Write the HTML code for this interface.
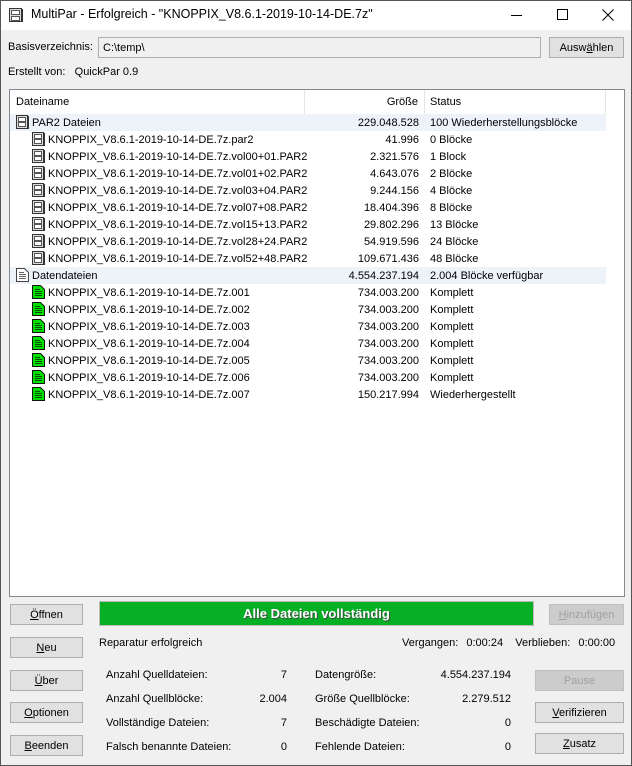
<!DOCTYPE html>
<html><head><style>
*{margin:0;padding:0;box-sizing:border-box}
body{width:632px;height:766px;overflow:hidden;background:#f0f0f0;font-family:"Liberation Sans",sans-serif;font-size:11px;color:#000;position:relative}
.frame{position:absolute;left:0;top:0;width:632px;height:766px;border:1px solid #555;z-index:5;pointer-events:none}
.a{position:absolute;white-space:nowrap}
.title{position:absolute;left:0;top:0;width:632px;height:30px;background:#fff}
.btn{position:absolute;background:#e1e1e1;border:1px solid #adadad;text-align:center;line-height:20px}
.dis{color:#a0a0a0;background:#cccccc;border-color:#bfbfbf}
.list{position:absolute;left:9px;top:89px;width:616px;height:508px;background:#fff;border:1px solid #828790}
.hdr{position:absolute;top:0;height:24px;line-height:25px;border-right:1px solid #e5e5e5}
.row{position:absolute;left:0;width:596px;height:17px;line-height:18px}
.hl{background:#eef3fa}
.ic{position:absolute;width:13px;height:14px}
.r{text-align:right}
u{text-decoration:underline}
</style></head><body>
<div class="frame"></div>
<div class="title"></div>
<svg class="a" style="left:8px;top:7px" width="16" height="16"><rect x="1.5" y="1.5" width="12" height="13" fill="#ddd" stroke="#333"/><rect x="3.5" y="3.5" width="8" height="4" fill="#fff" stroke="#555"/><rect x="3.5" y="9.5" width="8" height="4" fill="#fff" stroke="#555"/><line x1="14.5" y1="2" x2="14.5" y2="15" stroke="#333"/></svg>
<div class="a" style="left:31px;top:7px;font-size:12.5px">MultiPar - Erfolgreich - "KNOPPIX_V8.6.1-2019-10-14-DE.7z"</div>
<div class="a" style="left:511px;top:15px;width:11px;height:1px;background:#000"></div>
<div class="a" style="left:557px;top:9px;width:11px;height:11px;border:1px solid #000"></div>
<svg class="a" style="left:602px;top:9px" width="12" height="12"><path d="M0.5 0.5L11.5 11.5M11.5 0.5L0.5 11.5" stroke="#000"/></svg>

<div class="a" style="left:8px;top:41px">Basisverzeichnis:</div>
<div class="a" style="left:98px;top:37px;width:443px;height:21px;border:1px solid #adadad;background:#f0f0f0;padding:4px 4px">C:\temp\</div>
<div class="btn" style="left:549px;top:37px;width:75px;height:21px">Ausw<u>ä</u>hlen</div>
<div class="a" style="left:8px;top:66px">Erstellt von:&nbsp;&nbsp; QuickPar 0.9</div>

<div class="list">
<div class="hdr" style="left:0;width:295px;padding-left:6px">Dateiname</div>
<div class="hdr r" style="left:295px;width:120px;padding-right:6px">Größe</div>
<div class="hdr" style="left:415px;width:181px;padding-left:5px">Status</div>
<div id="rows"></div>
</div>

<div class="a" style="left:99px;top:601px;width:435px;height:25px;background:#06b025;border:1px solid #bcbcbc;color:#fff;font-weight:bold;font-size:13px;text-align:center;line-height:24px;text-shadow:1px 1px 1px #444">Alle Dateien vollständig</div>
<div class="btn" style="left:10px;top:604px;width:73px;height:21px"><u>Ö</u>ffnen</div>
<div class="btn" style="left:10px;top:637px;width:73px;height:21px"><u>N</u>eu</div>
<div class="btn" style="left:10px;top:670px;width:73px;height:21px"><u>Ü</u>ber</div>
<div class="btn" style="left:10px;top:702px;width:73px;height:21px"><u>O</u>ptionen</div>
<div class="btn" style="left:10px;top:735px;width:73px;height:21px"><u>B</u>eenden</div>
<div class="btn dis" style="left:549px;top:604px;width:75px;height:21px"><u>H</u>inzufügen</div>
<div class="btn dis" style="left:535px;top:670px;width:89px;height:21px">Pause</div>
<div class="btn" style="left:535px;top:702px;width:89px;height:21px"><u>V</u>erifizieren</div>
<div class="btn" style="left:535px;top:733px;width:89px;height:21px"><u>Z</u>usatz</div>
<div class="a" style="left:99px;top:637px">Reparatur erfolgreich</div>
<div class="a" style="left:402px;top:637px;word-spacing:1px">Vergangen:&nbsp; 0:00:24&nbsp;&nbsp; Verblieben:&nbsp; 0:00:00</div>

<div class="a" style="left:106px;top:669px">Anzahl Quelldateien:</div><div class="a r" style="left:200px;width:87px;top:669px">7</div>
<div class="a" style="left:106px;top:693px">Anzahl Quellblöcke:</div><div class="a r" style="left:200px;width:87px;top:693px">2.004</div>
<div class="a" style="left:106px;top:717px">Vollständige Dateien:</div><div class="a r" style="left:200px;width:87px;top:717px">7</div>
<div class="a" style="left:106px;top:741px">Falsch benannte Dateien:</div><div class="a r" style="left:200px;width:87px;top:741px">0</div>
<div class="a" style="left:315px;top:669px">Datengröße:</div><div class="a r" style="left:400px;width:111px;top:669px">4.554.237.194</div>
<div class="a" style="left:315px;top:693px">Größe Quellblöcke:</div><div class="a r" style="left:400px;width:111px;top:693px">2.279.512</div>
<div class="a" style="left:315px;top:717px">Beschädigte Dateien:</div><div class="a r" style="left:400px;width:111px;top:717px">0</div>
<div class="a" style="left:315px;top:741px">Fehlende Dateien:</div><div class="a r" style="left:400px;width:111px;top:741px">0</div>

<script>
var par='<svg class="ic" viewBox="0 0 13 14"><rect x="0.5" y="0.5" width="11" height="13" fill="#ddd" stroke="#333"/><rect x="2.5" y="2.5" width="7" height="4" fill="#fff" stroke="#555"/><rect x="2.5" y="7.5" width="7" height="4" fill="#fff" stroke="#555"/><line x1="12.5" y1="1" x2="12.5" y2="14" stroke="#333"/></svg>';
var doc='<svg class="ic" viewBox="0 0 13 14"><path d="M0.5 0.5H8.5L12.5 4.5V13.5H0.5Z" fill="#fff" stroke="#444"/><path d="M3 4.5H8M3 6.5H10M3 8.5H10M3 10.5H10" stroke="#666"/></svg>';
var grn='<svg class="ic" viewBox="0 0 13 14"><path d="M0.5 0.5H8.5L12.5 4.5V13.5H0.5Z" fill="#00e000" stroke="#111"/><path d="M3 4.5H8M3 6.5H10M3 8.5H10M3 10.5H10" stroke="#005000"/></svg>';
var p='KNOPPIX_V8.6.1-2019-10-14-DE.7z.';
var d=[[0,par,'PAR2 Dateien','229.048.528','100 Wiederherstellungsblöcke',1],
[1,par,p+'par2','41.996','0 Blöcke'],[1,par,p+'vol00+01.PAR2','2.321.576','1 Block'],
[1,par,p+'vol01+02.PAR2','4.643.076','2 Blöcke'],[1,par,p+'vol03+04.PAR2','9.244.156','4 Blöcke'],
[1,par,p+'vol07+08.PAR2','18.404.396','8 Blöcke'],[1,par,p+'vol15+13.PAR2','29.802.296','13 Blöcke'],
[1,par,p+'vol28+24.PAR2','54.919.596','24 Blöcke'],[1,par,p+'vol52+48.PAR2','109.671.436','48 Blöcke'],
[0,doc,'Datendateien','4.554.237.194','2.004 Blöcke verfügbar',1]];
for(var i=1;i<=6;i++)d.push([1,grn,p+'00'+i,'734.003.200','Komplett']);
d.push([1,grn,p+'007','150.217.994','Wiederhergestellt']);
var h='';
d.forEach(function(r,i){var t=24+i*17,x=r[0]?22:6;
h+='<div class="row'+(r[5]?' hl':'')+'" style="top:'+t+'px"><div class="a" style="left:'+x+'px;top:1px">'+r[1]+'</div><div class="a" style="left:'+(x+16)+'px">'+r[2]+'</div><div class="a r" style="left:295px;width:114px">'+r[3]+'</div><div class="a" style="left:420px">'+r[4]+'</div></div>';});
document.getElementById('rows').innerHTML=h;
</script>
</body></html>
